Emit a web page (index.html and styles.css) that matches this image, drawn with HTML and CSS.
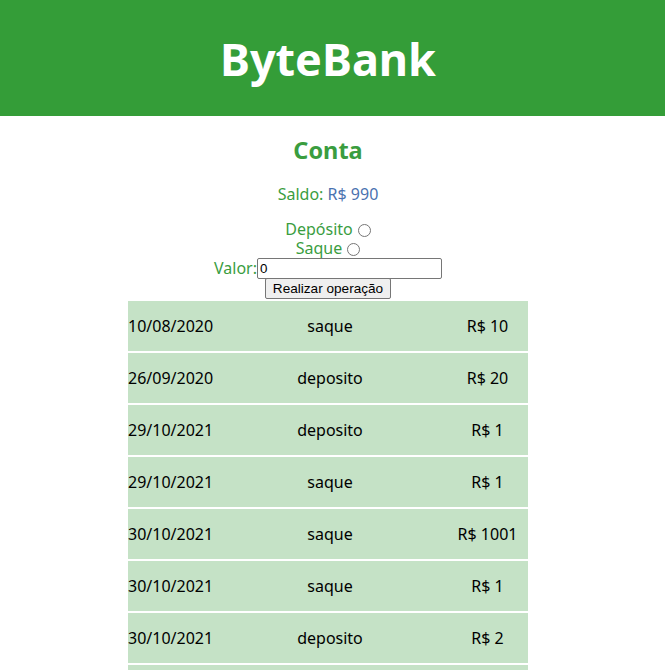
FILE: index.html
```html
<!DOCTYPE html>
<html lang="pt-BR">
<head>
<meta charset="utf-8">
<title>ByteBank</title>
<link rel="stylesheet" href="styles.css">
</head>
<body>
<header class="topo">
  <h1 class="logo">ByteBank</h1>
</header>
<main class="conta">
  <h2 class="conta-titulo">Conta</h2>
  <p class="saldo">Saldo: <span class="saldo-valor">R$ 990</span></p>
  <form class="operacao">
    <label class="linha">Depósito <input type="radio" name="tipo" class="radio"></label>
    <label class="linha">Saque <input type="radio" name="tipo" class="radio"></label>
    <label class="linha linha-valor">Valor:<input type="text" class="campo" value="0"></label>
    <div class="linha linha-botao"><button type="button" class="botao">Realizar operação</button></div>
  </form>
  <ul class="extrato">
    <li class="transacao"><span class="data">10/08/2020</span><span class="tipo">saque</span><span class="valor">R$ 10</span></li>
    <li class="transacao"><span class="data">26/09/2020</span><span class="tipo">deposito</span><span class="valor">R$ 20</span></li>
    <li class="transacao"><span class="data">29/10/2021</span><span class="tipo">deposito</span><span class="valor">R$ 1</span></li>
    <li class="transacao"><span class="data">29/10/2021</span><span class="tipo">saque</span><span class="valor">R$ 1</span></li>
    <li class="transacao"><span class="data">30/10/2021</span><span class="tipo">saque</span><span class="valor">R$ 1001</span></li>
    <li class="transacao"><span class="data">30/10/2021</span><span class="tipo">saque</span><span class="valor">R$ 1</span></li>
    <li class="transacao"><span class="data">30/10/2021</span><span class="tipo">deposito</span><span class="valor">R$ 2</span></li>
    <li class="transacao"><span class="data">30/10/2021</span><span class="tipo">saque</span><span class="valor">R$ 5</span></li>
  </ul>
</main>
</body>
</html>
```
FILE: styles.css
```css
* { box-sizing: border-box; }
html, body { margin: 0; padding: 0; }
body {
  font-family: "Noto Sans", "DejaVu Sans", sans-serif;
  font-size: 16px;
  color: #000;
  background: #fff;
}
.topo {
  background: #349d38;
  height: 116px;
  padding-right: 9px;
  display: flex;
  align-items: center;
  justify-content: center;
}
.logo {
  margin: 0;
  color: #fff;
  font-size: 45px;
  font-weight: 700;
  line-height: 1;
}
.conta {
  padding-right: 9px;
  display: flex;
  flex-direction: column;
  align-items: center;
}
.conta-titulo {
  margin: 20px 0 0;
  height: 28px;
  line-height: 28px;
  font-size: 23.5px;
  font-weight: 700;
  color: #3a9d3f;
}
.saldo {
  margin: 21px 0 0;
  height: 19px;
  line-height: 19px;
  color: #3a9d3f;
}
.saldo-valor { color: #4a72b0; }
.operacao {
  margin-top: 16px;
  display: flex;
  flex-direction: column;
  align-items: center;
}
.linha {
  display: flex;
  align-items: center;
  height: 19px;
  line-height: 19px;
  color: #3a9d3f;
}
.radio {
  margin: 1px 0 0 5px;
  width: 13px;
  height: 13px;
}
.linha-valor { height: 20px; }
.linha-botao { height: 22px; align-items: flex-start; }
.campo {
  margin: 0;
  width: 185px;
  height: 21px;
  font-family: "Liberation Sans", Arial, sans-serif;
  font-size: 13.33px;
  padding: 1px 2px;
  border: 1px solid #767676;
  border-radius: 2px;
}
.botao {
  margin: 0;
  height: 21px;
  padding: 1px 7px;
  font-family: "Liberation Sans", Arial, sans-serif;
  font-size: 13.6px;
  color: #000;
  background: #efefef;
  border: 1px solid #767676;
  border-radius: 2px;
}
.extrato {
  list-style: none;
  margin: 0;
  padding: 1px 0 0;
  width: 400px;
  display: flex;
  flex-direction: column;
  gap: 2px;
}
.transacao {
  display: grid;
  grid-template-columns: 85px 234px 81px;
  align-items: center;
  height: 50px;
  background: #c5e2c6;
}
.data { text-align: left; }
.tipo, .valor { text-align: center; }
```
